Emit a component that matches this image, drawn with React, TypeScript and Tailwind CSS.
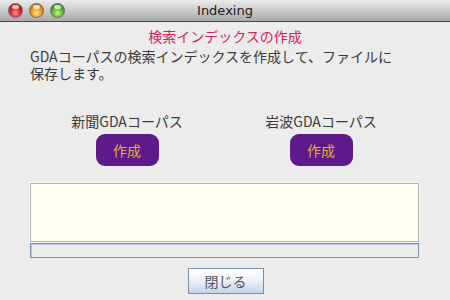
import React from "react";

const jp = { fontFamily: '"Noto Sans CJK JP", "Noto Sans", sans-serif' };

function Light({ c }: { c: string }) {
  const cls =
    c === "red"
      ? "bg-[radial-gradient(circle_at_50%_70%,#ff9a9a_0%,#e0262a_45%,#8a0c10_100%)]"
      : c === "orange"
      ? "bg-[radial-gradient(circle_at_50%_70%,#ffe08a_0%,#f09a1c_45%,#9a5206_100%)]"
      : "bg-[radial-gradient(circle_at_50%_70%,#c8f28a_0%,#5cb828_45%,#2c6a0c_100%)]";
  return (
    <div className={`relative w-[15px] h-[15px] rounded-full border border-[#6a6a6a] ${cls}`}>
      <div className="absolute left-[3px] top-[1px] w-[7px] h-[4px] rounded-full bg-white/70" />
    </div>
  );
}

function Column({ label }: { label: string }) {
  return (
    <div className="flex-1 flex flex-col items-center">
      <div className="text-[14px] leading-[18px] text-[#3a3a3a]" style={jp}>
        {label}
      </div>
      <button
        className="mt-[4px] w-[63px] h-[32px] rounded-[9px] bg-[#5e1a8a] text-[#e0b52a] text-[14px] leading-none"
        style={jp}
      >
        作成
      </button>
    </div>
  );
}

export default function App() {
  return (
    <div className="w-[450px] h-[300px] bg-[#ececec] flex flex-col overflow-hidden">
      <div className="h-[22px] flex items-center relative bg-[linear-gradient(#ebebeb,#a9a9a9)] border-b border-[#4a4a4a]">
        <div className="flex gap-[6px] pl-[8px]">
          <Light c="red" />
          <Light c="orange" />
          <Light c="green" />
        </div>
        <div
          className="absolute inset-0 flex items-center justify-center text-[13px] text-[#1a1a1a]"
          style={{ fontFamily: '"DejaVu Sans", sans-serif' }}
        >
          Indexing
        </div>
      </div>
      <div className="flex flex-col px-[30px] pt-[5px]">
        <div className="text-center text-[14px] leading-[18px] text-[#d9245a]" style={jp}>
          検索インデックスの作成
        </div>
        <div className="mt-[3px] text-[14px] leading-[17px] text-[#3a3a3a]" style={jp}>
          GDAコーパスの検索インデックスを作成して、ファイルに
          <br />
          保存します。
        </div>
        <div className="flex mt-[30px] pr-[2px]">
          <Column label="新聞GDAコーパス" />
          <Column label="岩波GDAコーパス" />
        </div>
        <div className="mt-[17px] w-[389px] h-[59px] bg-[#fffff0] border border-[#b2b2a8] shadow-[0_0_0_1px_#f8f8f8]" />
        <div className="mt-[1px] w-[389px] h-[15px] bg-[#ececec] border border-[#7c8ea8] shadow-[inset_1px_1px_0_#b8cce4]" />
        <div className="flex justify-center mt-[10px] pl-[1px]">
          <button
            className="w-[76px] h-[26px] border border-[#8090a4] bg-[linear-gradient(#ffffff,#eef3f9_45%,#c4d4e6)] text-[14px] text-[#555] leading-none"
            style={jp}
          >
            閉じる
          </button>
        </div>
      </div>
    </div>
  );
}
